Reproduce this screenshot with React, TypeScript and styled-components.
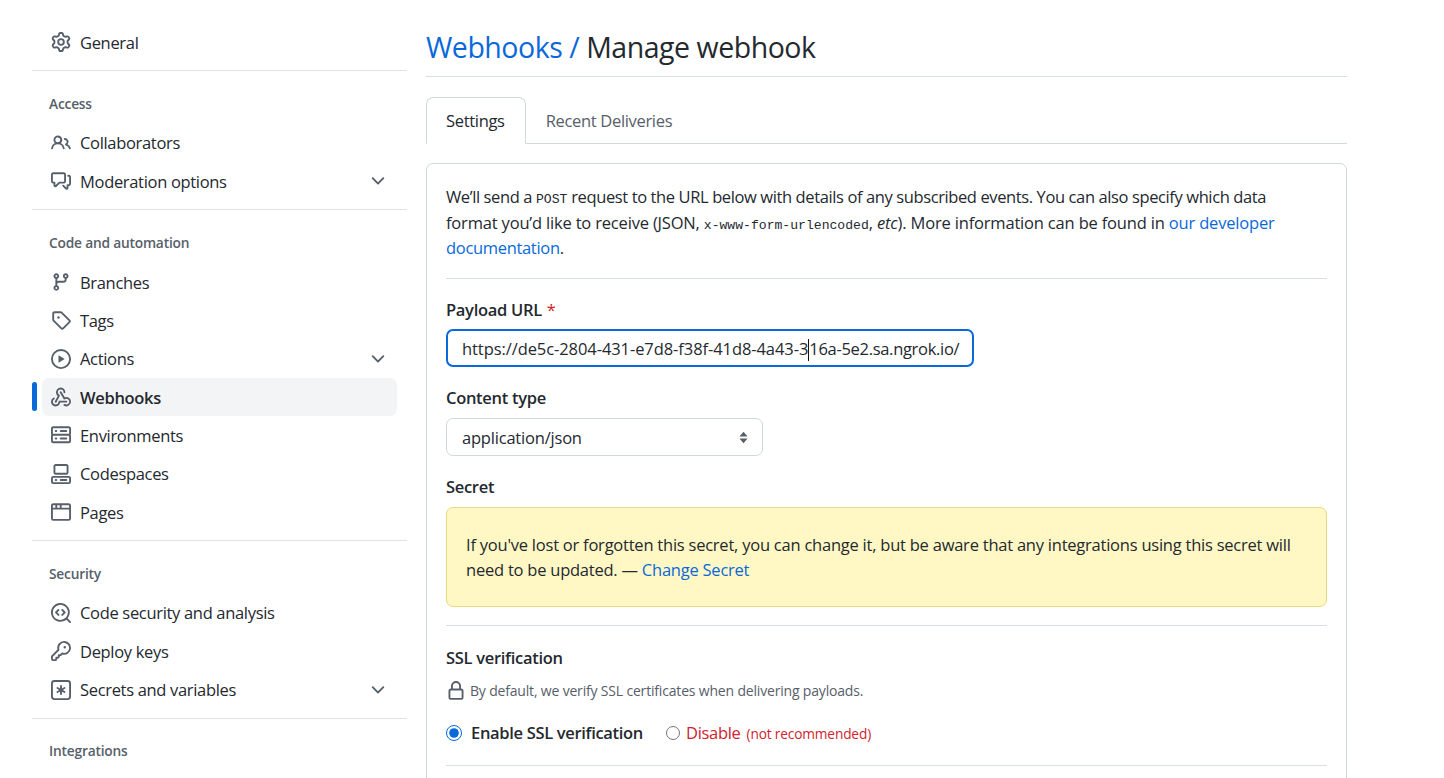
import React from "react";
import styled, { createGlobalStyle } from "styled-components";

const Global = createGlobalStyle`
  html, body { margin: 0; padding: 0; height: 778px; overflow: hidden; background: #fff; }
  body { font-family: "Open Sans", "Noto Sans", sans-serif; color: #24292f; font-size: 16.5px; letter-spacing: -0.32px; }
  * { box-sizing: border-box; }
`;

const ICONS: Record<string, string[]> = {
  gear: ["M8 0a8.2 8.2 0 0 1 .701.031C9.444.095 9.99.645 10.16 1.29l.288 1.107c.018.066.079.158.212.224.231.114.454.243.668.386.123.082.233.09.299.071l1.103-.303c.644-.176 1.392.021 1.82.63.27.385.506.792.704 1.218.315.675.111 1.422-.364 1.891l-.814.806c-.049.048-.098.147-.088.294.016.257.016.515 0 .772-.01.147.038.246.088.294l.814.806c.475.469.679 1.216.364 1.891a7.977 7.977 0 0 1-.704 1.217c-.428.61-1.176.807-1.82.63l-1.102-.302c-.067-.019-.177-.011-.3.071a5.909 5.909 0 0 1-.668.386c-.133.066-.194.158-.211.224l-.29 1.106c-.168.646-.715 1.196-1.458 1.26a8.006 8.006 0 0 1-1.402 0c-.743-.064-1.289-.614-1.458-1.26l-.289-1.106c-.018-.066-.079-.158-.212-.224a5.738 5.738 0 0 1-.668-.386c-.123-.082-.233-.09-.299-.071l-1.103.303c-.644.176-1.392-.021-1.82-.63a8.12 8.12 0 0 1-.704-1.218c-.315-.675-.111-1.422.363-1.891l.815-.806c.05-.048.098-.147.088-.294a6.214 6.214 0 0 1 0-.772c.01-.147-.038-.246-.088-.294l-.815-.806C.635 6.045.431 5.298.746 4.623a7.92 7.92 0 0 1 .704-1.217c.428-.61 1.176-.807 1.82-.63l1.102.302c.067.019.177.011.3-.071.214-.143.437-.272.668-.386.133-.066.194-.158.211-.224l.29-1.106C6.009.645 6.556.095 7.299.03 7.53.01 7.764 0 8 0Zm-.571 1.525c-.036.003-.108.036-.137.146l-.289 1.105c-.147.561-.549.967-.998 1.189-.173.086-.34.183-.5.29-.417.278-.97.423-1.529.27l-1.103-.303c-.109-.03-.175.016-.195.045-.22.312-.412.644-.573.99-.014.031-.021.11.059.19l.815.806c.411.406.562.957.53 1.456a4.709 4.709 0 0 0 0 .582c.032.499-.119 1.05-.53 1.456l-.815.806c-.081.08-.073.159-.059.19.162.346.353.677.573.989.02.03.085.076.195.046l1.102-.303c.56-.153 1.113-.008 1.53.27.161.107.328.204.501.29.447.222.85.629.997 1.189l.289 1.105c.029.109.101.143.137.146a6.6 6.6 0 0 0 1.142 0c.036-.003.108-.036.137-.146l.289-1.105c.147-.561.549-.967.998-1.189.173-.086.34-.183.5-.29.417-.278.97-.423 1.529-.27l1.103.303c.109.029.175-.016.195-.045.22-.313.411-.644.573-.99.014-.031.021-.11-.059-.19l-.815-.806c-.411-.406-.562-.957-.53-1.456a4.709 4.709 0 0 0 0-.582c-.032-.499.119-1.05.53-1.456l.815-.806c.081-.08.073-.159.059-.19a6.464 6.464 0 0 0-.573-.989c-.02-.03-.085-.076-.195-.046l-1.102.303c-.56.153-1.113.008-1.53-.27a4.44 4.44 0 0 0-.501-.29c-.447-.222-.85-.629-.997-1.189l-.289-1.105c-.029-.11-.101-.143-.137-.146a6.6 6.6 0 0 0-1.142 0ZM11 8a3 3 0 1 1-6 0 3 3 0 0 1 6 0ZM9.5 8a1.5 1.5 0 1 0-3.001.001A1.5 1.5 0 0 0 9.5 8Z"],
  people: ["M2 5.5a3.5 3.5 0 1 1 5.898 2.549 5.508 5.508 0 0 1 3.034 4.084.75.75 0 1 1-1.482.235 4 4 0 0 0-7.9 0 .75.75 0 0 1-1.482-.236A5.507 5.507 0 0 1 3.102 8.05 3.493 3.493 0 0 1 2 5.5ZM11 4a3.001 3.001 0 0 1 2.22 5.018 5.01 5.01 0 0 1 2.56 3.012.749.749 0 0 1-.885.954.752.752 0 0 1-.549-.514 3.507 3.507 0 0 0-2.522-2.372.75.75 0 0 1-.574-.73v-.352a.75.75 0 0 1 .416-.672A1.5 1.5 0 0 0 11 5.5.75.75 0 0 1 11 4Zm-5.5-.5a2 2 0 1 0-.001 3.999A2 2 0 0 0 5.5 3.5Z"],
  discussion: ["M1.75 1h8.5c.966 0 1.75.784 1.75 1.75v5.5A1.75 1.75 0 0 1 10.25 10H7.061l-2.574 2.573A1.458 1.458 0 0 1 2 11.543V10h-.25A1.75 1.75 0 0 1 0 8.25v-5.5C0 1.784.784 1 1.75 1ZM1.5 2.75v5.5c0 .138.112.25.25.25h1a.75.75 0 0 1 .75.75v2.19l2.72-2.72a.749.749 0 0 1 .53-.22h3.5a.25.25 0 0 0 .25-.25v-5.5a.25.25 0 0 0-.25-.25h-8.5a.25.25 0 0 0-.25.25Zm13 2a.25.25 0 0 0-.25-.25h-.5a.75.75 0 0 1 0-1.5h.5c.966 0 1.75.784 1.75 1.75v5.5A1.75 1.75 0 0 1 14.25 12H14v1.543a1.458 1.458 0 0 1-2.487 1.03L9.22 12.28a.749.749 0 0 1 .326-1.275.749.749 0 0 1 .734.215l2.22 2.22v-2.19a.75.75 0 0 1 .75-.75h1a.25.25 0 0 0 .25-.25Z"],
  branch: ["M9.5 3.25a2.25 2.25 0 1 1 3 2.122V6A2.5 2.5 0 0 1 10 8.5H6a1 1 0 0 0-1 1v1.128a2.251 2.251 0 1 1-1.5 0V5.372a2.25 2.25 0 1 1 1.5 0v1.836A2.493 2.493 0 0 1 6 7h4a1 1 0 0 0 1-1v-.628A2.25 2.25 0 0 1 9.5 3.25Zm-6 0a.75.75 0 1 0 1.5 0 .75.75 0 0 0-1.5 0Zm8.25-.75a.75.75 0 1 0 0 1.5.75.75 0 0 0 0-1.5ZM4.25 12a.75.75 0 1 0 0 1.5.75.75 0 0 0 0-1.5Z"],
  tag: ["M1 7.775V2.75C1 1.784 1.784 1 2.75 1h5.025c.464 0 .91.184 1.238.513l6.25 6.25a1.75 1.75 0 0 1 0 2.474l-5.026 5.026a1.75 1.75 0 0 1-2.474 0l-6.25-6.25A1.752 1.752 0 0 1 1 7.775Zm1.5 0c0 .066.026.13.073.177l6.25 6.25a.25.25 0 0 0 .354 0l5.025-5.025a.25.25 0 0 0 0-.354l-6.25-6.25a.25.25 0 0 0-.177-.073H2.75a.25.25 0 0 0-.25.25ZM6 5a1 1 0 1 1 0 2 1 1 0 0 1 0-2Z"],
  play: ["M8 0a8 8 0 1 1 0 16A8 8 0 0 1 8 0ZM1.5 8a6.5 6.5 0 1 0 13 0 6.5 6.5 0 0 0-13 0Zm4.879-2.773 4.264 2.559a.25.25 0 0 1 0 .428l-4.264 2.559A.25.25 0 0 1 6 10.559V5.442a.25.25 0 0 1 .379-.215Z"],
  webhook: [
    "M5.5 4.25a2.25 2.25 0 0 1 4.5 0 .75.75 0 0 0 1.5 0 3.75 3.75 0 1 0-6.14 2.889l-2.272 4.258a.75.75 0 0 0 1.324.706L7 7.25a.75.75 0 0 0-.309-1.015A2.25 2.25 0 0 1 5.5 4.25Z",
    "M7.364 3.607a.75.75 0 0 1 1.03.257l2.608 4.349a3.75 3.75 0 1 1-.628 6.785.75.75 0 0 1 .752-1.299 2.25 2.25 0 1 0-.033-3.88.75.75 0 0 1-1.03-.256L7.107 4.636a.75.75 0 0 1 .257-1.03Z",
    "M2.9 8.776A.75.75 0 0 1 2.625 9.8 2.25 2.25 0 1 0 6 11.75a.75.75 0 0 1 .75-.751h5.5a.75.75 0 0 1 0 1.5H7.425a3.751 3.751 0 1 1-5.55-3.998.75.75 0 0 1 1.024.274Z",
  ],
  server: ["M1.75 1h12.5c.966 0 1.75.784 1.75 1.75v4c0 .372-.116.717-.314 1 .198.283.314.628.314 1v4a1.75 1.75 0 0 1-1.75 1.75H1.75A1.75 1.75 0 0 1 0 12.75v-4c0-.358.109-.707.314-1a1.739 1.739 0 0 1-.314-1v-4C0 1.784.784 1 1.75 1ZM1.5 2.75v4c0 .138.112.25.25.25h12.5a.25.25 0 0 0 .25-.25v-4a.25.25 0 0 0-.25-.25H1.75a.25.25 0 0 0-.25.25Zm.25 5.75a.25.25 0 0 0-.25.25v4c0 .138.112.25.25.25h12.5a.25.25 0 0 0 .25-.25v-4a.25.25 0 0 0-.25-.25ZM7 4.75A.75.75 0 0 1 7.75 4h4.5a.75.75 0 0 1 0 1.5h-4.5A.75.75 0 0 1 7 4.75ZM7.75 10h4.5a.75.75 0 0 1 0 1.5h-4.5a.75.75 0 0 1 0-1.5ZM3 4.75A.75.75 0 0 1 3.75 4h.5a.75.75 0 0 1 0 1.5h-.5A.75.75 0 0 1 3 4.75ZM3.75 10h.5a.75.75 0 0 1 0 1.5h-.5a.75.75 0 0 1 0-1.5Z"],
  codespaces: [
    "M0 11.25c0-.966.784-1.75 1.75-1.75h12.5c.966 0 1.75.784 1.75 1.75v3A1.75 1.75 0 0 1 14.25 16H1.75A1.75 1.75 0 0 1 0 14.25Zm2-9.5C2 .784 2.784 0 3.75 0h8.5C13.216 0 14 .784 14 1.75v5a1.75 1.75 0 0 1-1.75 1.75h-8.5A1.75 1.75 0 0 1 2 6.75Zm1.75-.25a.25.25 0 0 0-.25.25v5c0 .138.112.25.25.25h8.5a.25.25 0 0 0 .25-.25v-5a.25.25 0 0 0-.25-.25Zm-2 9.5a.25.25 0 0 0-.25.25v3c0 .138.112.25.25.25h12.5a.25.25 0 0 0 .25-.25v-3a.25.25 0 0 0-.25-.25Z",
    "M7 12.75a.75.75 0 0 1 .75-.75h4.5a.75.75 0 0 1 0 1.5h-4.5a.75.75 0 0 1-.75-.75Zm-4 0a.75.75 0 0 1 .75-.75h.5a.75.75 0 0 1 0 1.5h-.5a.75.75 0 0 1-.75-.75Z",
  ],
  browser: ["M0 2.75C0 1.784.784 1 1.75 1h12.5c.966 0 1.75.784 1.75 1.75v10.5A1.75 1.75 0 0 1 14.25 15H1.75A1.75 1.75 0 0 1 0 13.25ZM14.5 6h-13v7.25c0 .138.112.25.25.25h12.5a.25.25 0 0 0 .25-.25Zm-6-3.5v2h6V2.75a.25.25 0 0 0-.25-.25ZM5 2.5v2h2v-2Zm-3.25 0a.25.25 0 0 0-.25.25V4.5h2v-2Z"],
  codescan: [
    "M8.47 4.97a.75.75 0 0 0 0 1.06L9.94 7.5 8.47 8.97a.75.75 0 1 0 1.06 1.06l2-2a.75.75 0 0 0 0-1.06l-2-2a.75.75 0 0 0-1.06 0ZM6.53 6.03a.75.75 0 0 0-1.06-1.06l-2 2a.75.75 0 0 0 0 1.06l2 2a.75.75 0 1 0 1.06-1.06L5.06 7.5l1.47-1.47Z",
    "M12.246 13.307a7.501 7.501 0 1 1 1.06-1.06l2.474 2.473a.749.749 0 0 1-.326 1.275.749.749 0 0 1-.734-.215ZM1.5 7.5a6.002 6.002 0 0 0 3.608 5.504 6.002 6.002 0 0 0 6.486-1.117.748.748 0 0 1 .292-.293A6 6 0 1 0 1.5 7.5Z",
  ],
  key: ["M10.5 0a5.499 5.499 0 1 1-1.288 10.848l-.932.932a.749.749 0 0 1-.53.22H7v.75a.749.749 0 0 1-.22.53l-.5.5a.749.749 0 0 1-.53.22H5v.75a.749.749 0 0 1-.22.53l-.5.5a.749.749 0 0 1-.53.22h-2A1.75 1.75 0 0 1 0 14.25v-2c0-.199.079-.389.22-.53l4.932-4.932A5.5 5.5 0 0 1 10.5 0Zm-4 5.5c-.001.431.069.86.205 1.269a.75.75 0 0 1-.181.768L1.5 12.56v1.69c0 .138.112.25.25.25h1.69l.06-.06v-1.19a.75.75 0 0 1 .75-.75h1.19l.06-.06v-1.19a.75.75 0 0 1 .75-.75h1.19l1.023-1.025a.75.75 0 0 1 .768-.18A4 4 0 1 0 6.5 5.5ZM11 6a1 1 0 1 1 0-2 1 1 0 0 1 0 2Z"],
  asterisk: [
    "M0 2.75A2.75 2.75 0 0 1 2.75 0h10.5A2.75 2.75 0 0 1 16 2.75v10.5A2.75 2.75 0 0 1 13.25 16H2.75A2.75 2.75 0 0 1 0 13.25ZM2.75 1.5c-.69 0-1.25.56-1.25 1.25v10.5c0 .69.56 1.25 1.25 1.25h10.5c.69 0 1.25-.56 1.25-1.25V2.75c0-.69-.56-1.25-1.25-1.25Z",
    "M8 4a.75.75 0 0 1 .75.75V6.7l1.69-.975a.75.75 0 0 1 .75 1.3L9.5 8l1.69.976a.75.75 0 0 1-.75 1.298L8.75 9.3v1.951a.75.75 0 0 1-1.5 0V9.299l-1.69.976a.75.75 0 0 1-.75-1.3L6.5 8l-1.69-.975a.75.75 0 0 1 .75-1.3l1.69.976V4.75A.75.75 0 0 1 8 4Z",
  ],
  chevron: ["M12.78 5.22a.749.749 0 0 1 0 1.06l-4.25 4.25a.749.749 0 0 1-1.06 0L3.22 6.28a.749.749 0 1 1 1.06-1.06L8 8.939l3.72-3.719a.749.749 0 0 1 1.06 0Z"],
  lock: ["M4 4a4 4 0 0 1 8 0v2h.25c.966 0 1.75.784 1.75 1.75v5.5A1.75 1.75 0 0 1 12.25 15h-8.5A1.75 1.75 0 0 1 2 13.25v-5.5C2 6.784 2.784 6 3.75 6H4Zm8.25 3.5h-8.5a.25.25 0 0 0-.25.25v5.5c0 .138.112.25.25.25h8.5a.25.25 0 0 0 .25-.25v-5.5a.25.25 0 0 0-.25-.25ZM10.5 6V4a2.5 2.5 0 1 0-5 0v2Z"],
};

const IconSvg = styled.svg`
  flex: none;
  width: 20px;
  height: 20px;
  fill: #57606a;
`;

const Octicon = ({ name }: { name: string }) => (
  <IconSvg viewBox="0 0 16 16" aria-hidden="true">
    {ICONS[name].map((d) => (
      <path key={d} d={d} />
    ))}
  </IconSvg>
);

const Page = styled.div`
  display: flex;
  gap: 19px;
  padding: 0 0 0 32px;
  height: 778px;
  overflow: hidden;
`;

const Sidebar = styled.nav`
  width: 375px;
  flex: none;
  padding-top: 23px;
`;

const Group = styled.section`
  margin-top: 8.8px;
  border-top: 1px solid #dfe3e8;
`;

const TopGroup = styled.section``;

const GroupHead = styled.h3`
  margin: 0;
  padding: 20.7px 0 8px 17px;
  height: 52.7px;
  font-size: 13.75px;
  line-height: 24px;
  font-weight: 600;
  color: #57606a;
  letter-spacing: -0.2px;
`;

const Row = styled.a<{ $active?: boolean }>`
  position: relative;
  display: flex;
  align-items: center;
  gap: 9px;
  height: 38.33px;
  margin: 0 10px;
  padding: 0 9px;
  border-radius: 7px;
  color: #24292f;
  font-weight: ${(p) => (p.$active ? 600 : 400)};
  background: ${(p) => (p.$active ? "#f3f4f6" : "transparent")};
  ${(p) =>
    p.$active
      ? `&::before { content: ""; position: absolute; left: -10px; top: 4px; width: 5px; height: 29px; border-radius: 3px; background: #0969da; }`
      : ""}
`;

const Label = styled.span`
  flex: 1;
  white-space: nowrap;
`;

const Main = styled.main`
  width: 921px;
  flex: none;
`;

const PageHead = styled.header`
  height: 77px;
  padding-top: 25px;
  border-bottom: 1px solid #d8dee4;
`;

const Title = styled.h1`
  margin: 0;
  font-size: 28.5px;
  line-height: 44px;
  font-weight: 400;
  letter-spacing: -0.47px;
  white-space: nowrap;
`;

const Crumb = styled.a`
  color: #0969da;
`;

const Tabs = styled.div`
  display: flex;
  margin-top: 20px;
  height: 47px;
  border-bottom: 1px solid #d0d7de;
`;

const Tab = styled.div<{ $active?: boolean }>`
  height: 47px;
  display: flex;
  align-items: center;
  padding: 0 20px 0 19px;
  white-space: nowrap;
  border-radius: 7px 7px 0 0;
  color: ${(p) => (p.$active ? "#24292f" : "#57606a")};
  border: 1px solid ${(p) => (p.$active ? "#d0d7de" : "transparent")};
  border-bottom: 1px solid ${(p) => (p.$active ? "#fff" : "transparent")};
  background: ${(p) => (p.$active ? "#fff" : "transparent")};
`;

const Box = styled.div`
  margin-top: 19px;
  border: 1px solid #d0d7de;
  border-radius: 7px;
  padding: 20px 19px;
  height: 800px;
`;

const Para = styled.p`
  margin: 0;
  line-height: 25.5px;
  white-space: nowrap;
`;

const Tracked = styled.span<{ $track: number }>`
  letter-spacing: ${(p) => p.$track}px;
`;

const Mono = styled.code`
  font-family: "Liberation Mono", monospace;
  font-size: 13.1px;
  line-height: 0;
  letter-spacing: 0;
`;

const Link = styled.a`
  color: #0969da;
`;

const Rule = styled.hr<{ $top: number; $bottom: number }>`
  border: 0;
  border-top: 1px solid #d8dee4;
  margin: ${(p) => p.$top}px 0 ${(p) => p.$bottom}px;
`;

const FieldLabel = styled.div`
  font-weight: 600;
  line-height: 24px;
  letter-spacing: -0.3px;
`;

const Req = styled.span`
  color: #cf222e;
  font-weight: 400;
  margin-left: 1px;
`;

const UrlInput = styled.div`
  width: 528px;
  height: 38px;
  margin: 7px 0 19px;
  border: 2px solid #0969da;
  border-radius: 7px;
  padding: 3px 14px 0;
  display: flex;
  align-items: center;
  white-space: nowrap;
`;

const Caret = styled.span`
  display: inline-block;
  width: 0;
  height: 22px;
  border-left: 1px solid #111;
  vertical-align: middle;
`;

const SelectBox = styled.div`
  width: 317px;
  height: 38px;
  margin: 8px 0 19px;
  border: 1px solid #d0d7de;
  border-radius: 7px;
  padding: 1px 14px 0 15px;
  display: flex;
  align-items: center;
  justify-content: space-between;
  white-space: nowrap;
  letter-spacing: -0.2px;
`;

const Flash = styled.div`
  margin-top: 8px;
  height: 100px;
  padding: 24px 19px 0;
  background: #fff8c5;
  border: 1px solid #ecd87e;
  border-radius: 7px;
  line-height: 25.5px;
  white-space: nowrap;
  letter-spacing: -0.23px;
`;

const Note = styled.div`
  display: flex;
  align-items: center;
  gap: 4px;
  margin-top: 9px;
  height: 24px;
  font-size: 14px;
  color: #57606a;
  letter-spacing: -0.18px;
  white-space: nowrap;
`;

const RadioRow = styled.div`
  display: flex;
  align-items: center;
  margin-top: 16px;
  height: 28px;
  white-space: nowrap;
`;

const Radio = styled.input<{ $size: number }>`
  width: ${(p) => p.$size}px;
  height: ${(p) => p.$size}px;
  margin: 0;
  flex: none;
  accent-color: #0969da;
`;

const EnableLabel = styled.span`
  font-weight: 600;
  margin-left: 9px;
  margin-right: 23px;
  letter-spacing: -0.32px;
`;

const Danger = styled.span`
  color: #cf222e;
  margin-left: 6px;
`;

const DangerSmall = styled.small`
  font-size: 13.7px;
  letter-spacing: -0.15px;
  margin-left: 6px;
`;

const Sort = () => (
  <svg width="9" height="15" viewBox="0 0 10 16" fill="#57606a" aria-hidden="true">
    <path d="M5 1.5 9.5 7H.5zM5 14.5.5 9h9z" />
  </svg>
);

type Item = { icon: string; label: string; chevron?: boolean; active?: boolean };

const groups: { head: string; items: Item[] }[] = [
  {
    head: "Access",
    items: [
      { icon: "people", label: "Collaborators" },
      { icon: "discussion", label: "Moderation options", chevron: true },
    ],
  },
  {
    head: "Code and automation",
    items: [
      { icon: "branch", label: "Branches" },
      { icon: "tag", label: "Tags" },
      { icon: "play", label: "Actions", chevron: true },
      { icon: "webhook", label: "Webhooks", active: true },
      { icon: "server", label: "Environments" },
      { icon: "codespaces", label: "Codespaces" },
      { icon: "browser", label: "Pages" },
    ],
  },
  {
    head: "Security",
    items: [
      { icon: "codescan", label: "Code security and analysis" },
      { icon: "key", label: "Deploy keys" },
      { icon: "asterisk", label: "Secrets and variables", chevron: true },
    ],
  },
  { head: "Integrations", items: [] },
];

const NavRow = ({ icon, label, chevron, active }: Item) => (
  <Row $active={active}>
    <Octicon name={icon} />
    <Label>{label}</Label>
    {chevron && <Octicon name="chevron" />}
  </Row>
);

export default function App() {
  return (
    <>
      <Global />
      <Page>
        <Sidebar>
          <TopGroup>
            <NavRow icon="gear" label="General" />
          </TopGroup>
          {groups.map((g) => (
            <Group key={g.head}>
              <GroupHead>{g.head}</GroupHead>
              {g.items.map((it) => (
                <NavRow key={it.label} {...it} />
              ))}
            </Group>
          ))}
        </Sidebar>
        <Main>
          <PageHead>
            <Title>
              <Crumb>Webhooks /</Crumb> Manage webhook
            </Title>
          </PageHead>
          <Tabs>
            <Tab $active>Settings</Tab>
            <Tab>Recent Deliveries</Tab>
          </Tabs>
          <Box>
            <Para>
              <Tracked $track={-0.39}>
                We’ll send a <Mono>POST</Mono> request to the URL below with details of any subscribed events. You can also specify which data
              </Tracked>
              <br />
              <Tracked $track={-0.18}>
                format you’d like to receive (JSON, <Mono>x-www-form-urlencoded</Mono>, <em>etc</em>). More information can be found in{" "}
                <Link>our developer</Link>
              </Tracked>
              <br />
              <Link>documentation</Link>.
            </Para>
            <Rule $top={17} $bottom={19} />
            <FieldLabel>
              Payload URL <Req>*</Req>
            </FieldLabel>
            <UrlInput>
              <span>
                <Tracked $track={-0.08}>https://de5c-2804-431-e7d8-f38f-41d8-4a43-3</Tracked>
                <Caret />
                <Tracked $track={-0.3}>16a-5e2.sa.ngrok.io/</Tracked>
              </span>
            </UrlInput>
            <FieldLabel>Content type</FieldLabel>
            <SelectBox>
              <span>application/json</span>
              <Sort />
            </SelectBox>
            <FieldLabel>Secret</FieldLabel>
            <Flash>
              If you've lost or forgotten this secret, you can change it, but be aware that any integrations using this secret will
              <br />
              need to be updated. — <Link>Change Secret</Link>
            </Flash>
            <Rule $top={18} $bottom={20} />
            <FieldLabel>SSL verification</FieldLabel>
            <Note>
              <Octicon name="lock" />
              By default, we verify SSL certificates when delivering payloads.
            </Note>
            <RadioRow>
              <Radio $size={16} type="radio" name="ssl" defaultChecked />
              <EnableLabel>Enable SSL verification</EnableLabel>
              <Radio $size={14} type="radio" name="ssl" />
              <Danger>
                Disable<DangerSmall>(not recommended)</DangerSmall>
              </Danger>
            </RadioRow>
            <Rule $top={18} $bottom={0} />
          </Box>
        </Main>
      </Page>
    </>
  );
}
